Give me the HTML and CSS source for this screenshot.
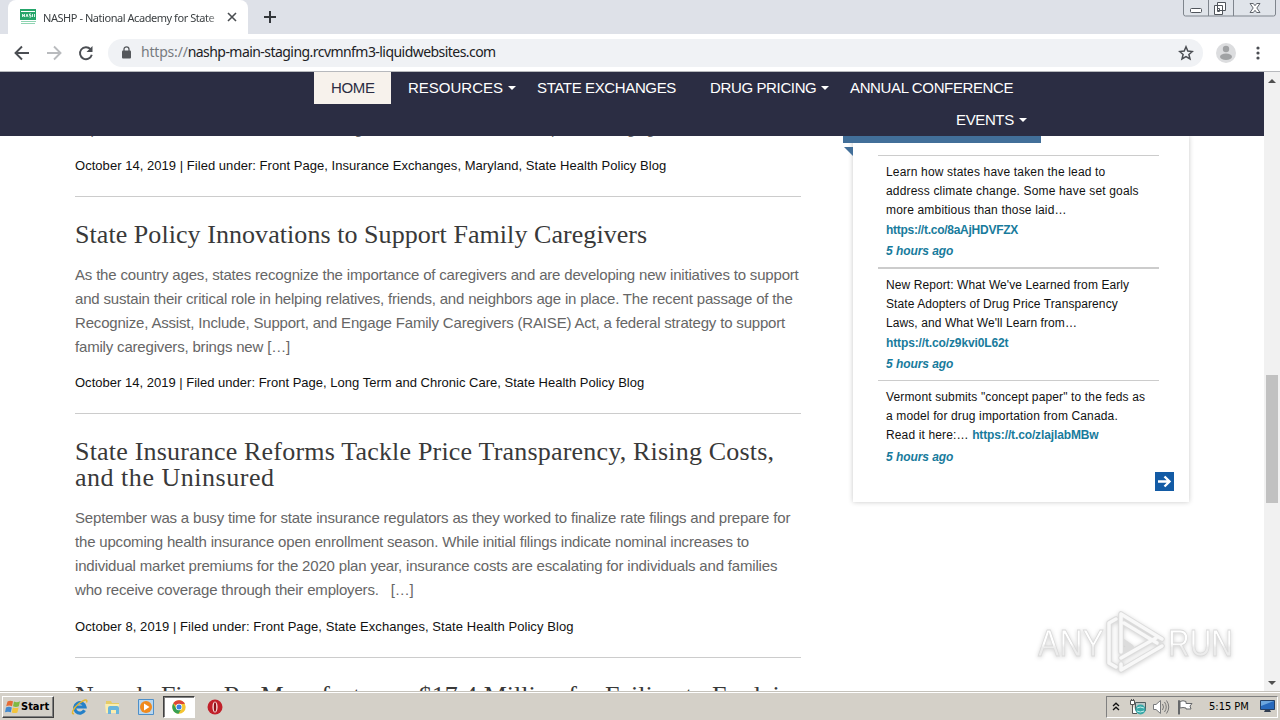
FILE: index.html
```html
<!DOCTYPE html>
<html lang="en">
<head>
<meta charset="utf-8">
<title>NASHP - National Academy for State Health Policy</title>
<link rel="stylesheet" href="styles.css">
</head>
<body>
<div class="screen">
  <div class="tabstrip">
    <div class="tab">
      <svg class="favicon" width="16" height="16" viewBox="0 0 16 16"><path fill="#25a56a" d="M0 0h16v11H0z"/><path fill="#8fd4b2" d="M1 12h15v1H1zM1 14h14v1H1z"/><path fill="#fff" d="M1 2h14v1H1z"/><path stroke="#d9f3e6" fill="none" d="M2.500 8V5l2 3V5M6 8l1-3 1 3M11 5H9.500v1.500H11V8H9.500M12.500 5v3M14.500 5v3"/></svg>
      <span class="tab-title">NASHP - National Academy for State</span>
      <svg class="tab-close" width="10" height="10" viewBox="0 0 10 10"><path stroke="#4a4d51" stroke-width="1.600" d="M1 1l8 8M9 1L1 9"/></svg>
    </div>
    <svg class="new-tab" width="12" height="12" viewBox="0 0 12 12"><path stroke="#33363b" stroke-width="2" d="M6 0v12M0 6h12"/></svg>
    <svg class="win-controls" width="94" height="18" viewBox="0 0 94 18"><path fill="#e0e4ea" stroke="#7f858d" d="M.500 0v14q0 2 2 2h88q2 0 2-2V0M25.500 0v16M50.500 0v16"/><rect x="7.500" y="8.500" width="11" height="4" rx="1" fill="#fff" stroke="#50555c"/><path fill="#fff" stroke="#50555c" stroke-linejoin="round" d="M34.500 2.500h8v8h-8zM31.500 5.500h8v9h-8z"/><path fill="none" stroke="#50555c" d="M34.500 8.500h2v3h-2z"/><path fill="#fff" stroke="#50555c" stroke-width=".900" d="M67 3.500h3.300l1.700 2.200 1.700-2.200H77l-3.200 4.500 3.200 4.500h-3.300L72 10.300l-1.700 2.200H67L70.200 8z"/></svg>
  </div>
  <div class="toolbar">
    <svg class="nav-icons" width="82" height="18" viewBox="0 0 82 18" fill="none" stroke-width="1.900"><path stroke="#4b4e53" d="M15 9H2M8 2.500L1.500 9 8 15.500"/><path stroke="#b9bbbe" d="M33 9h13M40 2.500L46.500 9 40 15.500"/><path stroke="#4b4e53" d="M76.500 5.200A6 6 0 1 0 77.800 10.800"/><path fill="#4b4e53" d="M78.500 2v6h-6z"/></svg>
    <div class="omnibox">
      <svg width="10" height="13" viewBox="0 0 10 13"><rect y="4.500" width="9" height="8" rx="1" fill="#55585c"/><path fill="none" stroke="#55585c" stroke-width="1.300" d="M2 5V3.300a2.500 2.500 0 0 1 5 0V5"/></svg>
      <span class="url"><span class="scheme">https://</span>nashp-main-staging.rcvmnfm3-liquidwebsites.com</span>
      <svg class="star" width="16" height="16" viewBox="0 0 16 16"><path fill="none" stroke="#4b4e53" stroke-width="1.500" d="M8 1.800l1.800 4.300 4.600.4-3.500 3 1.100 4.500L8 11.600 4 14l1.100-4.500-3.500-3 4.600-.4z"/></svg>
    </div>
    <svg class="avatar" width="20" height="20" viewBox="0 0 20 20"><circle cx="10" cy="10" r="10" fill="#dcdddf"/><circle cx="10" cy="6" r="3.200" fill="#a0a2a4"/><ellipse cx="10" cy="13.800" rx="6" ry="3.200" fill="#a0a2a4"/></svg>
    <svg class="menu" width="4" height="14" viewBox="0 0 4 14" fill="#4b4e53"><circle cx="2" cy="2" r="1.600"/><circle cx="2" cy="7" r="1.600"/><circle cx="2" cy="12" r="1.600"/></svg>
  </div>
  <div class="viewport">
    <div class="page">
      <nav class="site-nav">
        <div class="nav-row">
          <a class="active home">HOME</a>
          <a class="resources">RESOURCES<i class="caret"></i></a>
          <a class="exchanges">STATE EXCHANGES</a>
          <a class="pricing">DRUG PRICING<i class="caret"></i></a>
          <a class="conference">ANNUAL CONFERENCE</a>
        </div>
        <div class="nav-row second"><a class="events">EVENTS<i class="caret"></i></a></div>
      </nav>
      <div class="content">
        <main class="posts">
          <article class="post cut">
            <p class="excerpt">expanded access to affordable care coverage in the individual market, as plans managing</p>
            <p class="meta maryland">October 14, 2019 | Filed under: Front Page, Insurance Exchanges, Maryland, State Health Policy Blog</p>
          </article>
          <article class="post">
            <h2 class="caregivers">State Policy Innovations to Support Family Caregivers</h2>
            <p class="excerpt">As the country ages, states recognize the importance of caregivers and are developing new initiatives to support<br>and sustain their critical role in helping relatives, friends, and neighbors age in place. The recent passage of the<br>Recognize, Assist, Include, Support, and Engage Family Caregivers (RAISE) Act, a federal strategy to support<br>family caregivers, brings new […]</p>
            <p class="meta">October 14, 2019 | Filed under: Front Page, Long Term and Chronic Care, State Health Policy Blog</p>
          </article>
          <article class="post">
            <h2 class="reforms">State Insurance Reforms Tackle Price Transparency, Rising Costs,<br><span class="wide">and the Uninsured</span></h2>
            <p class="excerpt">September was a busy time for state insurance regulators as they worked to finalize rate filings and prepare for<br>the upcoming health insurance open enrollment season. While initial filings indicate nominal increases to<br>individual market premiums for the 2020 plan year, insurance costs are escalating for individuals and families<br>who receive coverage through their employers. &nbsp; […]</p>
            <p class="meta last">October 8, 2019 | Filed under: Front Page, State Exchanges, State Health Policy Blog</p>
          </article>
          <article class="post"><h2>Nevada Fines Rx Manufacturers $17.4 Million for Failing to Explain</h2></article>
        </main>
        <aside class="tweets">
          <div class="ribbon"></div>
          <div class="ribbon-fold"></div>
          <ul>
            <li class="first">Learn how states have taken the lead to<br>address climate change. Some have set goals<br>more ambitious than those laid…<br><a>https://t.co/8aAjHDVFZX</a><em>5 hours ago</em></li>
            <li class="thick">New Report: What We've Learned from Early<br>State Adopters of Drug Price Transparency<br>Laws, and What We'll Learn from…<br><a>https://t.co/z9kvi0L62t</a><em>5 hours ago</em></li>
            <li class="third">Vermont submits "concept paper" to the feds as<br>a model for drug importation from Canada.<br>Read it here:… <a>https://t.co/zlajlabMBw</a><em>5 hours ago</em></li>
          </ul>
          <svg class="more" width="19" height="19" viewBox="0 0 19 19"><path fill="#135ba5" d="M0 0h19v19H0z"/><path fill="none" stroke="#fff" stroke-width="2.400" d="M3 9.500h11M9.500 4.500l5 5-5 5"/></svg>
        </aside>
      </div>
    </div>
    <div class="scrollbar"><i class="up"></i><div class="thumb"></div><i class="down"></i></div>
  </div>
  <div class="taskbar">
    <div class="start"><svg width="16" height="16" viewBox="0 0 16 16"><path fill="#e56b35" d="M2.500 2.500Q5 1 8 2.300L7 7.200Q4 6 1.200 7.300z"/><path fill="#7fb943" d="M9 2.600q3 1.200 6-.3l-1.200 5q-3 1.300-5.800 0z"/><path fill="#4289cf" d="M1 8.400q3-1.300 5.800 0l-1 4.900Q3 12 0 13.300z"/><path fill="#f3c43c" d="M7.800 8.500q3 1.200 5.800 0l-1.200 5q-2.800 1.200-5.600-.1z"/></svg><b>Start</b></div>
    <div class="launch">
      <svg width="18" height="18" viewBox="0 0 18 18"><path fill="none" stroke="#2480c8" stroke-width="3.200" d="M13.500 12.300A5.200 5.200 0 1 1 14 9H5"/><path fill="none" stroke="#e5b730" stroke-width="1.400" d="M3 15.500C-.500 17 2 10 8 5.500s9-4.500 7.500-1"/></svg>
      <svg width="18" height="18" viewBox="0 0 18 18"><path fill="#e6cc67" d="M2 3h5l1 2h7v10H2z"/><path fill="#fbedae" d="M1 6h14v9H2z"/><path fill="#69b5dc" d="M4 10q0-2 2-2h7q2 0 2 2v6h-3v-4H7v4H4z"/></svg>
      <svg width="18" height="18" viewBox="0 0 18 18"><path fill="#b9d7ef" stroke="#4d8fc9" d="M1.500 1.500h15v15h-15z"/><circle cx="9" cy="9" r="6" fill="#f08a1d"/><path fill="#fff" d="M7 5.500L12.500 9 7 12.500z"/></svg>
      <div class="running"><svg width="14" height="14" viewBox="0 0 14 14"><circle cx="7" cy="7" r="6.700" fill="#f5c531"/><path fill="#dc4638" d="M7 7L1.200 3.600A6.700 6.700 0 0 1 12.900 3.900H7z"/><path fill="#38a052" d="M1.200 3.600A6.700 6.700 0 0 0 6.500 13.700L9.500 8.500 4.200 8.600z"/><circle cx="7" cy="7" r="3.200" fill="#fff"/><circle cx="7" cy="7" r="2.500" fill="#3c7fe0"/></svg></div>
      <svg class="opera" width="16" height="16" viewBox="0 0 16 16"><circle cx="8" cy="8" r="7.500" fill="#c1202a"/><ellipse cx="8" cy="8" rx="2.600" ry="5.500" fill="#f8dcdc"/><ellipse cx="8" cy="8" rx="1.200" ry="4.800" fill="#8f1017"/></svg>
    </div>
    <div class="tray">
      <svg width="8" height="9" viewBox="0 0 8 9"><path fill="none" stroke="#111" stroke-width="1.300" d="M1 4l3-2.800L7 4M1 8l3-2.800L7 8"/></svg>
      <svg class="net" width="17" height="16" viewBox="0 0 17 16"><path fill="#bbc8c8" stroke="#4f5d60" d="M5.500 3.500h10v8h-10z"/><path fill="#fff" stroke="#555" d="M.500 1.500h4v4h-4zM2.500 6v8.500H7M1.500 0v2M3.500 0v2"/><circle cx="10.500" cy="10.500" r="5" fill="#38a8a8"/><path fill="none" stroke="#c8efec" d="M7 9q3-2 7 0M7 12q3 2 7 0"/></svg>
      <svg class="sound" width="17" height="16" viewBox="0 0 17 16"><path fill="#fff" stroke="#77797b" d="M.500 5.500H3L7.500 1.500v13L3 10.500H.500z"/><path fill="none" stroke="#777" d="M9.500 5q2 3 0 6M11.500 3q3.500 5 0 10M13.500 1.500q4.500 6.500 0 13"/></svg>
      <svg class="flag" width="17" height="16" viewBox="0 0 17 16"><path fill="#fff" stroke="#66686a" d="M1.500 15.500V1.500h1v14M3 2.500q3-1.500 6 0v2h6l-2 2.500 1 3H9V9Q6 8 3 9z"/></svg>
      <span class="clock">5:15 PM</span>
      <svg class="desk" width="16" height="13" viewBox="0 0 16 13"><path fill="#2769bd" stroke="#254066" d="M.500.500h14v9H.500z"/><path fill="#6ca6df" d="M1 1h13L1 6z"/><path fill="#313d50" d="M5 10h5l1 2H4z"/></svg>
    </div>
  </div>
  <svg class="watermark" width="210" height="80" viewBox="0 0 210 80"><defs><linearGradient id="fade" x1="0" y1="0" x2="0" y2="1"><stop offset=".5" stop-color="#fff"/><stop offset=".6" stop-color="#ececec"/></linearGradient></defs><g fill="url(#fade)" stroke="#dadada" stroke-width=".8"><text x="8" y="54" textLength="66" lengthAdjust="spacingAndGlyphs">ANY</text><text x="138" y="54" textLength="65" lengthAdjust="spacingAndGlyphs">RUN</text></g><g fill="none" stroke-linejoin="round" stroke-linecap="round"><path stroke="#dcdcdc" stroke-width="5.500" d="M86 17l-7 4v40l7 4M91 12v38l10-5M91 12l41 25M94 21l33 20M101 45l-10-7M91 62v6l41-24M91 56l35-20"/><path stroke="#f8f8f8" stroke-width="3.500" d="M86 17l-7 4v40l7 4M91 12v38M91 12l41 25M94 21l33 20M91 62v6l41-24M91 56l35-20"/></g></svg>
</div>
</body>
</html>
```
FILE: styles.css
```css
* { box-sizing: border-box; }
body { margin: 0; background: #fff; font-family: "Liberation Sans", Arial, sans-serif; }
svg { display: block; flex: none; }
p, h2, ul { margin: 0; padding: 0; }
.screen { position: relative; width: 1280px; height: 720px; overflow: hidden; display: flex; flex-direction: column; white-space: nowrap; }

.tabstrip { flex: none; height: 34px; background: #dee1e8; display: flex; }
.tab { width: 240px; margin-left: 8px; background: #fff; border-radius: 8px 8px 0 0; display: flex; align-items: center; padding-left: 12px; }
.tab-title { width: 177px; margin-left: 7px; overflow: hidden; font: 11px "Noto Sans", sans-serif; letter-spacing: -.45px; color: #3c4043; -webkit-mask-image: linear-gradient(90deg, #000 92%, rgba(0, 0, 0, .2)); mask-image: linear-gradient(90deg, #000 92%, rgba(0, 0, 0, .2)); }
.tab-close { margin-left: 7px; }
.new-tab { margin: 11px 0 0 16px; }
.win-controls { margin-left: auto; margin-right: 3px; }
.toolbar { flex: none; height: 38px; display: flex; align-items: center; background: #fff; border-bottom: 1px solid #b7b9bd; padding: 0 19px 0 14px; }
.omnibox { width: 1095px; height: 28px; margin-left: 12px; border-radius: 14px; background: #f0f2f5; display: flex; align-items: center; padding: 0 9px 0 14px; }
.url { position: relative; top: -1px; margin-left: 9px; font: 14px "Noto Sans", sans-serif; letter-spacing: -.55px; color: #202124; }
.scheme { color: #777b80; letter-spacing: -.2px; }
.star { margin-left: auto; }
.avatar { margin-left: 13px; }
.menu { margin-left: 20px; }

.viewport { flex: none; height: 620px; display: flex; overflow: hidden; }
.page { width: 1264px; overflow: hidden; }
.site-nav { height: 64px; background: #2b2d43; color: #fff; font-size: 15px; letter-spacing: -.37px; }
.nav-row { height: 32px; display: flex; padding-left: 314px; }
.nav-row a { height: 32px; line-height: 32px; padding-left: 17px; }
.nav-row .active { background: #f7f2ec; color: #2b2d43; }
.home { width: 77px; }
.resources { width: 129px; letter-spacing: 0; }
.exchanges { width: 173px; }
.pricing { width: 140px; }
.conference { width: 183px; }
.second { padding-left: 939px; }
.caret { display: inline-block; margin-left: 5px; vertical-align: 3px; border: 4px solid transparent; border-top-color: #fff; border-bottom: 0; }

.content { height: 556px; overflow: hidden; display: flex; padding-left: 75px; }
.posts { width: 726px; }
.post { padding: 25px 0 20px; border-bottom: 1px solid #ccc; }
.cut { padding-top: 0; margin-top: -19px; }
h2 { font: 26px/26px "Liberation Serif", serif; color: #393939; margin-bottom: 15px; }
.caregivers { letter-spacing: .06px; }
.reforms { letter-spacing: .19px; }
.wide { letter-spacing: .52px; }
.excerpt { font-size: 15px; line-height: 24px; letter-spacing: -.18px; color: #666; }
.meta { margin-top: 14px; font-size: 13px; line-height: 20px; letter-spacing: .01px; color: #111; }
.maryland { margin-top: 15px; letter-spacing: .04px; }
.last { margin-top: 15px; letter-spacing: .07px; }

.tweets { position: relative; width: 336px; height: 366px; margin-left: 52px; padding: 19px 30px 0 25px; box-shadow: 0 0 5px rgba(0, 0, 0, .22); }
.ribbon { position: absolute; left: -10px; top: 0; width: 198px; height: 7px; background: #426f99; }
.ribbon-fold { position: absolute; left: -9px; top: 11px; border-top: 9px solid #426f99; border-left: 9px solid transparent; }
ul { list-style: none; }
li { border-top: 1px solid #ccc; padding: 7px 0 6px 8px; height: 112px; font-size: 12px; line-height: 19.2px; color: #111; }
.first { letter-spacing: .17px; }
.thick { border-top-width: 2px; height: 113px; letter-spacing: .09px; }
.third { letter-spacing: .14px; }
li a, li em { color: #187b9c; font-weight: bold; letter-spacing: -.13px; }
.first a { letter-spacing: -.26px; }
li em { display: block; line-height: 22px; letter-spacing: -.06px; }
.more { position: absolute; left: 302px; top: 336px; }
.scrollbar { width: 16px; background: #f1f1f1; display: flex; flex-direction: column; align-items: center; }
.up { margin-top: 7px; border: 4px solid transparent; border-top: 0; border-bottom-color: #505050; }
.thumb { width: 12px; height: 128px; margin-top: 292px; background: #c1c1c1; }
.down { margin-top: 178px; border: 4px solid transparent; border-bottom: 0; border-top-color: #505050; }

.taskbar { flex: none; height: 28px; background: #d4d0c8; border-top: 1px solid #fff; box-shadow: 0 -1px #c5c2bb; display: flex; align-items: center; }
.start { width: 52px; height: 22px; margin-left: 2px; display: flex; align-items: center; padding-left: 2px; border: 1px solid; border-color: #fff #404040 #404040 #fff; box-shadow: inset -1px -1px #808080; font: 11px "DejaVu Sans Condensed", "DejaVu Sans", sans-serif; }
.start b { font-stretch: condensed; }
.launch { display: flex; align-items: center; margin-left: 17px; gap: 15px; }
.running { width: 32px; height: 22px; margin: 0 -6px 0 -7px; display: flex; align-items: center; justify-content: center; background: #fff; border: 1px solid; border-color: #404040 #fff #fff #404040; box-shadow: inset 1px 1px #808080; }
.opera { margin-left: 3px; }
.tray { width: 172px; height: 22px; margin-left: auto; margin-right: 2px; display: flex; align-items: center; padding: 0 1px 0 5px; border: 1px solid; border-color: #808080 #fff #fff #808080; }
.net { margin-left: 10px; }
.sound { margin-left: 6px; }
.flag { margin-left: 7px; }
.clock { margin-left: 15px; font: 11px "DejaVu Sans Condensed", "DejaVu Sans", sans-serif; font-stretch: condensed; }
.desk { margin-left: auto; }
.watermark { position: absolute; left: 1030px; top: 602px; filter: drop-shadow(0 1px 2px rgba(0, 0, 0, .18)); }
.watermark text { font: 37px "Liberation Sans", sans-serif; }
```
